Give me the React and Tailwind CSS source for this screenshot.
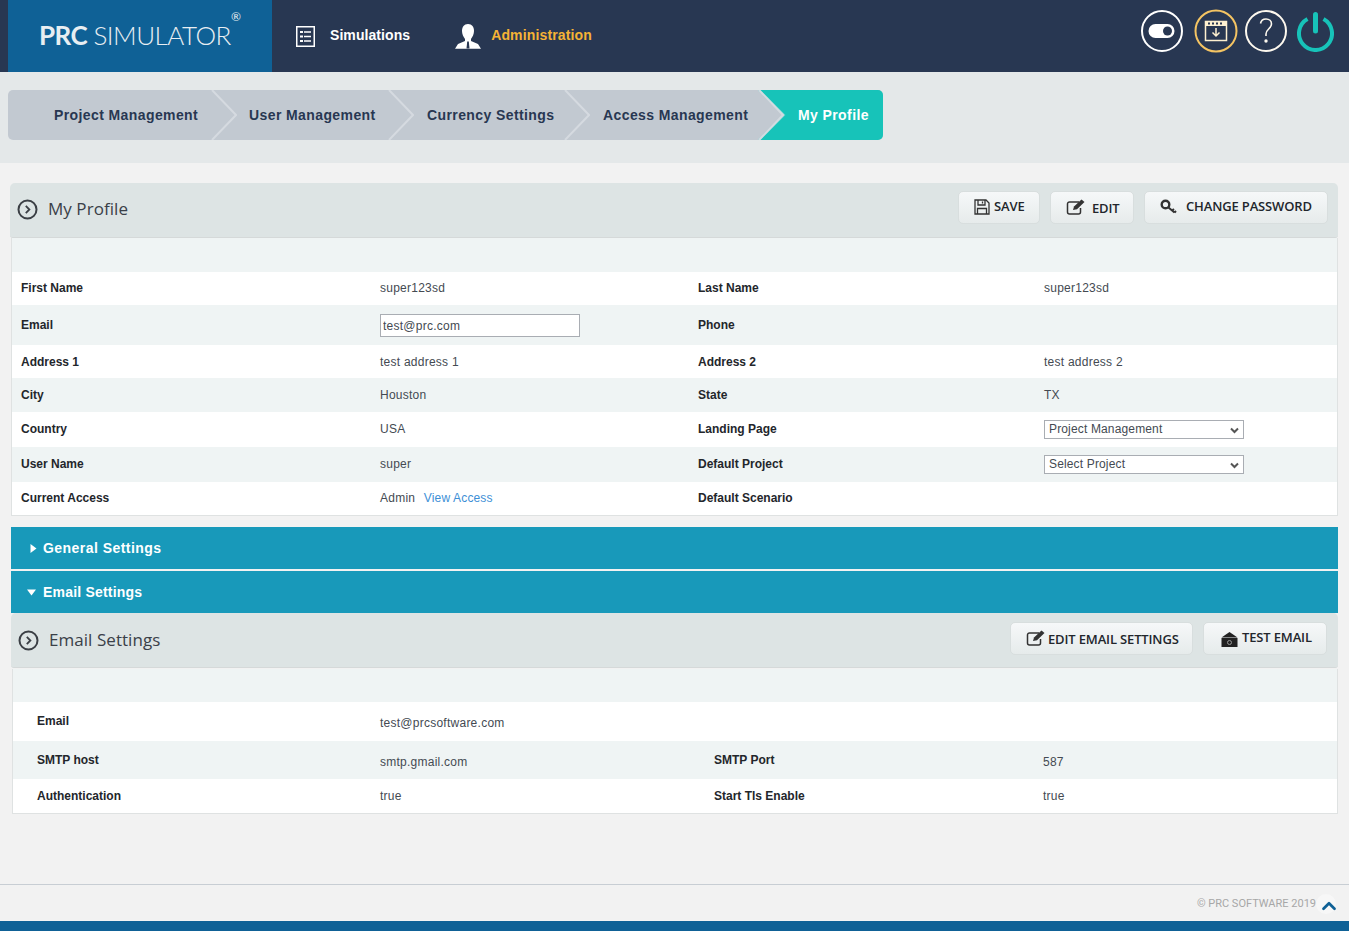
import { ChevronUp } from "lucide-react";

const crumbs = [
  { label: "Project Management", w: "w-[204px]", pl: "pl-[46px]" },
  { label: "User Management", w: "w-[177px]", pl: "pl-[37px]" },
  { label: "Currency Settings", w: "w-[176px]", pl: "pl-[38px]" },
  { label: "Access Management", w: "w-[194px]", pl: "pl-[38px]" },
];

function CircleArrow() {
  return (
    <svg width="21" height="21" viewBox="0 0 21 21" fill="none" stroke="#3b3f45" strokeWidth="2">
      <circle cx="10.5" cy="10.5" r="9" />
      <path d="M8.8 6.8l3.6 3.7-3.6 3.7" strokeWidth="1.8" />
    </svg>
  );
}

function EditIcon() {
  return (
    <svg width="20" height="16" viewBox="0 0 20 16" fill="none">
      <path d="M13 3H3.5A2 2 0 0 0 1.500 5v8a2 2 0 0 0 2 2h9a2 2 0 0 0 2-2V9" stroke="#333" strokeWidth="1.500" />
      <path d="M7 11l1-3.500L15.500 0.500 18.500 3 11 10.200z" fill="#333" />
    </svg>
  );
}

function SelectBox({ text }) {
  return (
    <div className="relative mt-px flex h-[19px] w-[200px] items-center border border-[#a9adb3] bg-white pb-[2px] pl-1 tracking-[0.15px]">
      {text}
      <svg className="absolute right-[4px] top-[6px]" width="9" height="7" viewBox="0 0 9 7" fill="none">
        <path d="M1 1.500l3.500 3.500L8 1.500" stroke="#555" strokeWidth="2" />
      </svg>
    </div>
  );
}

function SectionHeader({ title, children, className, actionsClass }) {
  return (
    <div className={`flex items-center justify-between rounded-t-[5px] rounded-b-[3px] border-b border-[#d5d9d9] bg-[#dde4e4] ${className}`}>
      <div className="flex items-center">
        <CircleArrow />
        <span className="ml-[10px] font-['Open_Sans',sans-serif] text-[17px] tracking-[0.05px] text-[#3a4048]">{title}</span>
      </div>
      <div className={`flex items-center ${actionsClass}`}>{children}</div>
    </div>
  );
}

function ActionButton({ children, className }) {
  return (
    <button className={`flex h-[33px] items-center rounded-[5px] border border-[#d8dede] bg-gradient-to-b from-[#f6f8f9] to-[#e6ebeb] font-['Open_Sans',sans-serif] text-[13px] font-semibold tracking-[-0.15px] text-[#22262c] ${className}`}>
      {children}
    </button>
  );
}

function Row({ tinted, cols, className, cells, labelClass = "", valueClass = "" }) {
  return (
    <div className={`grid items-center ${cols} ${tinted ? "bg-[#eff4f4]" : "bg-white"} ${className}`}>
      {cells.map((cell, i) => (
        <div key={i} className={i % 2 === 0 ? `font-bold tracking-normal text-[#23262b] ${labelClass}` : `text-[#444a52] ${valueClass}`}>
          {cell}
        </div>
      ))}
    </div>
  );
}

const profileCols = "grid-cols-[359px_318px_346px_1fr] pl-[9px]";
const emailCols = "grid-cols-[343px_334px_329px_1fr] pl-[24px]";

export default function App() {
  return (
    <div className="flex min-h-[931px] flex-col bg-[#f2f2f2] font-['Liberation_Sans',Arial,sans-serif] text-[12px] tracking-[0.25px]">
      <header className="flex h-[72px] items-center bg-[#283752] pl-2">
        <div className="relative h-full w-[264px] bg-[#0f6196] pl-[31px] pt-[17px] font-['Lato',sans-serif] text-[26px] leading-9 tracking-[-0.5px] text-[#e8eef2]">
          <span className="font-bold">PRC</span> <span className="font-light">SIMULATOR</span>
          <span className="absolute left-[223px] top-[9px] text-[12px] leading-4 font-normal">®</span>
        </div>
        <svg className="ml-6" width="19" height="21" viewBox="0 0 19 21" fill="none">
          <rect x="0.750" y="0.750" width="17.500" height="19.500" stroke="white" strokeWidth="1.500" />
          <path d="M4 5h3v2H4zM4 9.500h3v2H4zM4 14h3v2H4z" fill="white" />
          <path d="M8 6h7M8 10.500h7M8 15h7" stroke="white" strokeWidth="1.500" />
        </svg>
        <span className="mb-[2px] ml-[15px] text-[14px] font-bold tracking-[0.07px] text-white">Simulations</span>
        <svg className="ml-[45px]" width="26" height="25" viewBox="0 0 26 25" fill="white">
          <path d="M13 0c4 0 6 3 6 7 0 3-1.500 6-3 8v2l7 3 3 4.800H0L3 20l7-3v-2C8.500 13 7 10 7 7c0-4 2-7 6-7z" />
          <path d="M12.200 17.500h1.600l.7 7h-3z" fill="#283752" />
        </svg>
        <span className="mb-[2px] ml-[10px] text-[14px] font-bold tracking-[0.15px] text-[#f5b335]">Administration</span>

        <div className="ml-auto flex items-center pb-[10px] pr-[15px]">
          <svg width="44" height="44" viewBox="0 0 44 44" fill="none">
            <circle cx="22" cy="22" r="20" stroke="white" strokeWidth="2" />
            <rect x="8.500" y="15" width="26" height="14" rx="7" fill="white" />
            <circle cx="27.500" cy="22" r="4.500" fill="#283752" />
          </svg>
          <svg className="ml-[10px]" width="44" height="44" viewBox="0 0 44 44" fill="none">
            <circle cx="22" cy="22" r="20.500" stroke="#f4c463" strokeWidth="2" />
            <rect x="11.500" y="12.500" width="21" height="19" stroke="#fdf0d0" strokeWidth="1.500" />
            <path d="M11 12h22v5H11z" fill="#fdf0d0" />
            <path d="M14 13.500h2v2h-2zM18 13.500h2v2h-2zM22 13.500h2v2h-2zM26 13.500h2v2h-2z" fill="#283752" />
            <path d="M22 19v7M18.500 23.500L22 27l3.500-3.500" stroke="#fdf0d0" strokeWidth="1.500" />
          </svg>
          <svg className="ml-[6px]" width="44" height="44" viewBox="0 0 44 44" fill="none">
            <circle cx="22" cy="22" r="20" stroke="#fdf8ee" strokeWidth="2" />
            <path d="M16.500 14.500c.5-3 2.800-4.500 5.500-4.500 3.200 0 5.500 2 5.500 5 0 4.500-5.500 5-5.500 10v2" stroke="#fdf8ee" strokeWidth="1.600" />
            <circle cx="22" cy="32" r="1.700" fill="#fdf8ee" />
          </svg>
          <svg className="ml-[9px] mt-[2px]" width="37" height="40" viewBox="0 0 37 40" fill="none" stroke="#17c3b9">
            <path d="M10.500 7.100a16.500 16.500 0 1 0 16 0" strokeWidth="4" />
            <path d="M18.500 2.500V19" strokeWidth="5" strokeLinecap="round" />
          </svg>
        </div>
      </header>

      <div className="h-[91px] bg-[#e4e8e9] pl-2 pt-[18px]">
        <nav className="flex h-[50px] w-[875px] overflow-hidden rounded-[5px] bg-[#c2c9d1] text-[14px] font-bold tracking-[0.4px] text-[#283752]">
          {crumbs.map((c) => (
            <div key={c.label} className={`relative flex items-center ${c.w} ${c.pl}`}>
              {c.label}
              <svg className="absolute right-[-25px] top-0 z-10" width="26" height="50" viewBox="0 0 26 50" fill="none">
                <path d="M1 0l24 25L1 50" stroke="#d5dae0" strokeWidth="2" />
              </svg>
            </div>
          ))}
          <div className="relative flex flex-1 items-center bg-[#17c3b9] pl-[39px] text-white">
            <svg className="absolute left-[-1px] top-0" width="28" height="50" viewBox="0 0 28 50">
              <path d="M0 0l25 25L0 50z" fill="#c2c9d1" />
              <path d="M1 0l25 25L1 50" fill="none" stroke="#6fd6d0" strokeWidth="2" />
            </svg>
            <span className="relative">My Profile</span>
          </div>
        </nav>
      </div>

      <main className="pl-[10px] pr-[11px] pt-5">
        <SectionHeader title="My Profile" className="h-[55px] pb-[2px] pl-[7px] pr-[10px]" actionsClass="mb-[4px]">
          <ActionButton className="w-[82px] pl-[15px]">
            <svg className="mr-[4px]" width="16" height="16" viewBox="0 0 16 16" fill="none" stroke="#333" strokeWidth="1.300">
              <path d="M1 1h11l3 3v11H1z" />
              <path d="M4 1v5h7V1M3.500 15V9.500h9V15M8.500 2.500v2" />
            </svg>
            SAVE
          </ActionButton>
          <ActionButton className="ml-[10px] w-[84px] pl-[15px]">
            <EditIcon />
            <span className="ml-[6px] mt-[4px]">EDIT</span>
          </ActionButton>
          <ActionButton className="ml-[10px] w-[184px] pl-[15px]">
            <svg width="18" height="16" viewBox="0 0 18 16" fill="none" stroke="#333">
              <circle cx="5.500" cy="5.500" r="3.800" strokeWidth="2.400" />
              <path d="M8.500 8.500l6 5M12 11.500l2-1.500M14.500 13.500l1.500-1.500" strokeWidth="2" />
            </svg>
            <span className="ml-[8px]">CHANGE PASSWORD</span>
          </ActionButton>
        </SectionHeader>

        <section className="ml-px border-x border-b border-[#dfe2e2]">
          <div className="h-[34px] bg-[#eff4f4]" />
          <Row cols={profileCols} className="h-[33px] pb-px" cells={["First Name", "super123sd", "Last Name", "super123sd"]} />
          <Row
            tinted
            cols={profileCols}
            className="h-[40px]"
            cells={[
              "Email",
              <input
                key="email"
                readOnly
                value="test@prc.com"
                className="mt-px h-[23px] w-[200px] border border-[#a9adb3] bg-white px-[2px] tracking-[0.25px] text-[#444a52] outline-none"
              />,
              "Phone",
              "",
            ]}
          />
          <Row cols={profileCols} className="h-[33px]" cells={["Address 1", "test address 1", "Address 2", "test address 2"]} />
          <Row tinted cols={profileCols} className="h-[34px]" cells={["City", "Houston", "State", "TX"]} />
          <Row
            cols={profileCols}
            className="h-[35px] pb-px"
            cells={["Country", "USA", "Landing Page", <SelectBox key="landing" text="Project Management" />]}
          />
          <Row
            tinted
            cols={profileCols}
            className="h-[35px] pb-px"
            cells={["User Name", "super", "Default Project", <SelectBox key="project" text="Select Project" />]}
          />
          <Row
            cols={profileCols}
            className="h-[33px] pb-px"
            cells={[
              "Current Access",
              <span key="access">
                Admin <a className="ml-[5px] tracking-[0.15px] text-[#3d8fd6]">View Access</a>
              </span>,
              "Default Scenario",
              "",
            ]}
          />
        </section>

        <div className="mt-[11px] ml-px flex h-[42px] items-center bg-[#1899ba] text-[14px] font-bold tracking-[0.45px] text-white">
          <svg className="ml-[19px]" width="7" height="9" viewBox="0 0 7 9" fill="white">
            <path d="M0.500 0l6 4.500-6 4.500z" />
          </svg>
          <span className="ml-[6px]">General Settings</span>
        </div>
        <div className="mt-[2px] ml-px flex h-[42px] items-center bg-[#1899ba] text-[14px] font-bold tracking-[0.2px] text-white">
          <svg className="ml-[16px]" width="9" height="7" viewBox="0 0 9 7" fill="white">
            <path d="M0 0.500h9L4.500 6.500z" />
          </svg>
          <span className="ml-[7px]">Email Settings</span>
        </div>

        <SectionHeader title="Email Settings" className="ml-px h-[55px] pl-[7px] pr-[11px]" actionsClass="mb-[4px]">
          <ActionButton className="w-[183px] pl-[15px]">
            <EditIcon />
            <span className="ml-[2px] mt-[4px]">EDIT EMAIL SETTINGS</span>
          </ActionButton>
          <ActionButton className="ml-[10px] w-[124px] pl-[17px]">
            <svg className="mt-[3px]" width="17" height="15" viewBox="0 0 17 15">
              <path d="M0.500 5.500L8.500 0l8 5.500z" fill="#222" />
              <rect x="0.500" y="6" width="16" height="9" fill="#222" />
              <circle cx="8.500" cy="10.500" r="2" fill="none" stroke="#999" />
            </svg>
            <span className="ml-[4px] mb-[1px]">TEST EMAIL</span>
          </ActionButton>
        </SectionHeader>

        <section className="ml-[2px] mt-px border-x border-b border-[#dfe2e2]">
          <div className="h-[33px] bg-[#eff4f4]" />
          <Row cols={emailCols} className="h-[39px]" labelClass="pb-[2px]" valueClass="pt-[2px]" cells={["Email", "test@prcsoftware.com", "", ""]} />
          <Row tinted cols={emailCols} className="h-[38px]" valueClass="pt-[4px]" cells={["SMTP host", "smtp.gmail.com", "SMTP Port", "587"]} />
          <Row cols={emailCols} className="h-[34px]" cells={["Authentication", "true", "Start Tls Enable", "true"]} />
        </section>
      </main>

      <footer className="mt-auto">
        <div className="flex h-[37px] items-center justify-end border-t border-[#c8ced4] pt-[2px] pr-[13px] font-['Roboto',sans-serif] text-[11px] text-[#a7a7a7]">
          <span className="tracking-normal">© PRC SOFTWARE 2019</span>
          <span className="flex h-5 w-5 items-center justify-center rounded-full bg-[#f7f7f7]">
            <ChevronUp size={22} strokeWidth={3} className="ml-[5px] mt-[3px] shrink-0 text-[#0f6196]" />
          </span>
        </div>
        <div className="h-[10px] bg-[#0f6196]" />
      </footer>
    </div>
  );
}
